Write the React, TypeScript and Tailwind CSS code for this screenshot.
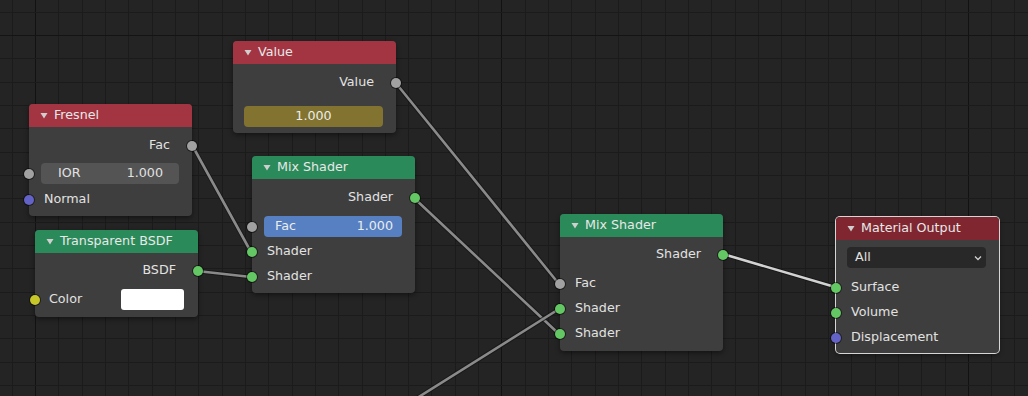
import React from "react";

const SOCK: Record<string, string> = {
  grey: "bg-[#a1a1a1]",
  green: "bg-[#63c763]",
  blue: "bg-[#6363c7]",
  yellow: "bg-[#c7c729]",
};

function Socket({ color, side }: { color: string; side: "left" | "right" }) {
  return (
    <span
      className={`absolute top-1/2 -translate-y-1/2 w-[10px] h-[10px] rounded-full ring-1 ring-black/50 ${
        side === "left" ? "left-[-5px]" : "right-[-5px]"
      } ${SOCK[color]}`}
    />
  );
}

function OutRow({ label, color }: { label: string; color: string }) {
  return (
    <div className="relative h-[25px] flex items-center justify-end pr-[22px]">
      <span>{label}</span>
      <Socket color={color} side="right" />
    </div>
  );
}

function InRow({ label, color }: { label: string; color: string }) {
  return (
    <div className="relative h-[25px] flex items-center pl-[15px]">
      <span>{label}</span>
      <Socket color={color} side="left" />
    </div>
  );
}

function Tri() {
  return (
    <svg width="8" height="7" viewBox="0 0 8 7" className="shrink-0">
      <polygon points="0.5,1 7.5,1 4,6.5" fill="#cfcfcf" />
    </svg>
  );
}

function Node({
  pos,
  head,
  title,
  children,
  extra = "",
}: {
  pos: string;
  head: string;
  title: string;
  children: React.ReactNode;
  extra?: string;
}) {
  return (
    <div
      className={`absolute ${pos} w-[163px] rounded-[4px] bg-[#3e3e3e] shadow-[0_2px_5px_rgba(0,0,0,0.45)] ${extra}`}
    >
      <div
        className={`h-[23px] flex items-center pl-[11px] gap-[6px] rounded-t-[4px] text-[#e8e8e8] ${head}`}
      >
        <Tri />
        <span>{title}</span>
      </div>
      <div className="text-[#e2e2e2]">{children}</div>
    </div>
  );
}

const xs = Array.from({ length: 45 }, (_, k) => ({ k, v: Math.round(11.7 + 23.32 * k) }));
const ys = Array.from({ length: 18 }, (_, k) => ({ k, v: Math.round(11.7 + 23.33 * k) }));

type W = [number, number, number, number, boolean?];
const wires: W[] = [
  [395, 82, 559, 284],
  [192, 145, 251, 252],
  [197, 271, 251, 277],
  [414, 198, 559, 334],
  [382, 420, 559, 309],
  [723, 254, 835, 287, true],
];

export default function App() {
  return (
    <div className="relative w-[1028px] h-[396px] overflow-hidden bg-[#242424] font-['DejaVu_Sans',sans-serif] text-[12.7px] leading-none">
      <svg className="absolute inset-0" width="1028" height="396" shapeRendering="crispEdges">
        {xs.map(({ k, v }) => (
          <rect key={"x" + k} x={v} y={0} width={1} height={396} fill={k % 20 === 1 ? "#121212" : "#1b1b1b"} />
        ))}
        {ys.map(({ k, v }) => (
          <rect key={"y" + k} x={0} y={v} width={1028} height={1} fill={k === 1 ? "#141414" : "#1b1b1b"} />
        ))}
      </svg>
      <svg className="absolute inset-0" width="1028" height="396">
        {wires.map(([x1, y1, x2, y2, hi], i) => (
          <g key={i}>
            <line x1={x1} y1={y1} x2={x2} y2={y2} stroke="rgba(20,20,20,0.7)" strokeWidth={4.5} strokeLinecap="round" />
            <line
              x1={x1}
              y1={y1}
              x2={x2}
              y2={y2}
              stroke={hi ? "#d2d2d2" : "#8a8a8a"}
              strokeWidth={2.6}
              strokeLinecap="round"
            />
          </g>
        ))}
      </svg>

      {/* Value */}
      <Node pos="left-[233px] top-[41px]" head="bg-[#a33542]" title="Value">
        <div className="pt-[6px] pb-[6px]">
          <OutRow label="Value" color="grey" />
          <div className="mt-[11px] ml-[11px] w-[139px] h-[21px] rounded-[4px] bg-[#827330] flex items-center justify-center text-[#ececec]">
            1.000
          </div>
        </div>
      </Node>

      {/* Fresnel */}
      <Node pos="left-[29px] top-[104px]" head="bg-[#a33542]" title="Fresnel">
        <div className="pt-[6px] pb-[4px]">
          <OutRow label="Fac" color="grey" />
          <div className="relative mt-[5px] h-[21px]">
            <Socket color="grey" side="left" />
            <div className="ml-[12px] w-[138px] h-full rounded-[4px] bg-[#545454] flex items-center justify-between pl-[17px] pr-[16px]">
              <span>IOR</span>
              <span>1.000</span>
            </div>
          </div>
          <div className="mt-[3px]">
            <InRow label="Normal" color="blue" />
          </div>
        </div>
      </Node>

      {/* Mix Shader 1 */}
      <Node pos="left-[252px] top-[156px]" head="bg-[#2b8a5a]" title="Mix Shader">
        <div className="pt-[6px] pb-[4px]">
          <OutRow label="Shader" color="green" />
          <div className="relative mt-[6px] h-[21px]">
            <Socket color="grey" side="left" />
            <div className="ml-[12px] w-[138px] h-full rounded-[4px] bg-[#5680c2] flex items-center justify-between pl-[11px] pr-[9px] text-[#ececec]">
              <span>Fac</span>
              <span>1.000</span>
            </div>
          </div>
          <div className="mt-[2px]">
            <InRow label="Shader" color="green" />
            <InRow label="Shader" color="green" />
          </div>
        </div>
      </Node>

      {/* Transparent BSDF */}
      <Node pos="left-[35px] top-[230px]" head="bg-[#2b8a5a]" title="Transparent BSDF">
        <div className="pt-[5px] pb-[7px]">
          <OutRow label="BSDF" color="green" />
          <div className="relative mt-[6px] h-[21px] flex items-center pl-[14px]">
            <Socket color="yellow" side="left" />
            <span>Color</span>
            <div className="ml-auto mr-[14px] w-[63px] h-full rounded-[3px] bg-white" />
          </div>
        </div>
      </Node>

      {/* Mix Shader 2 */}
      <Node pos="left-[560px] top-[214px]" head="bg-[#2b8a5a]" title="Mix Shader">
        <div className="pt-[5px] pb-[5px]">
          <OutRow label="Shader" color="green" />
          <div className="mt-[4px]">
            <InRow label="Fac" color="grey" />
            <InRow label="Shader" color="green" />
            <InRow label="Shader" color="green" />
          </div>
        </div>
      </Node>

      {/* Material Output */}
      <Node
        pos="left-[836px] top-[217px]"
        head="bg-[#7f2630]"
        title="Material Output"
        extra="ring-1 ring-[#d6d6d6]"
      >
        <div className="pt-[7px] pb-[3px]">
          <div className="ml-[11px] w-[139px] h-[21px] rounded-[4px] bg-[#282828] flex items-center pl-[8px] pr-[4px]">
            <span>All</span>
            <svg width="8" height="6" viewBox="0 0 8 6" className="ml-auto">
              <polyline points="1,1.5 4,4.5 7,1.5" fill="none" stroke="#d0d0d0" strokeWidth="1.3" />
            </svg>
          </div>
          <div className="mt-[7px]">
            <InRow label="Surface" color="green" />
            <InRow label="Volume" color="green" />
            <InRow label="Displacement" color="blue" />
          </div>
        </div>
      </Node>
    </div>
  );
}
